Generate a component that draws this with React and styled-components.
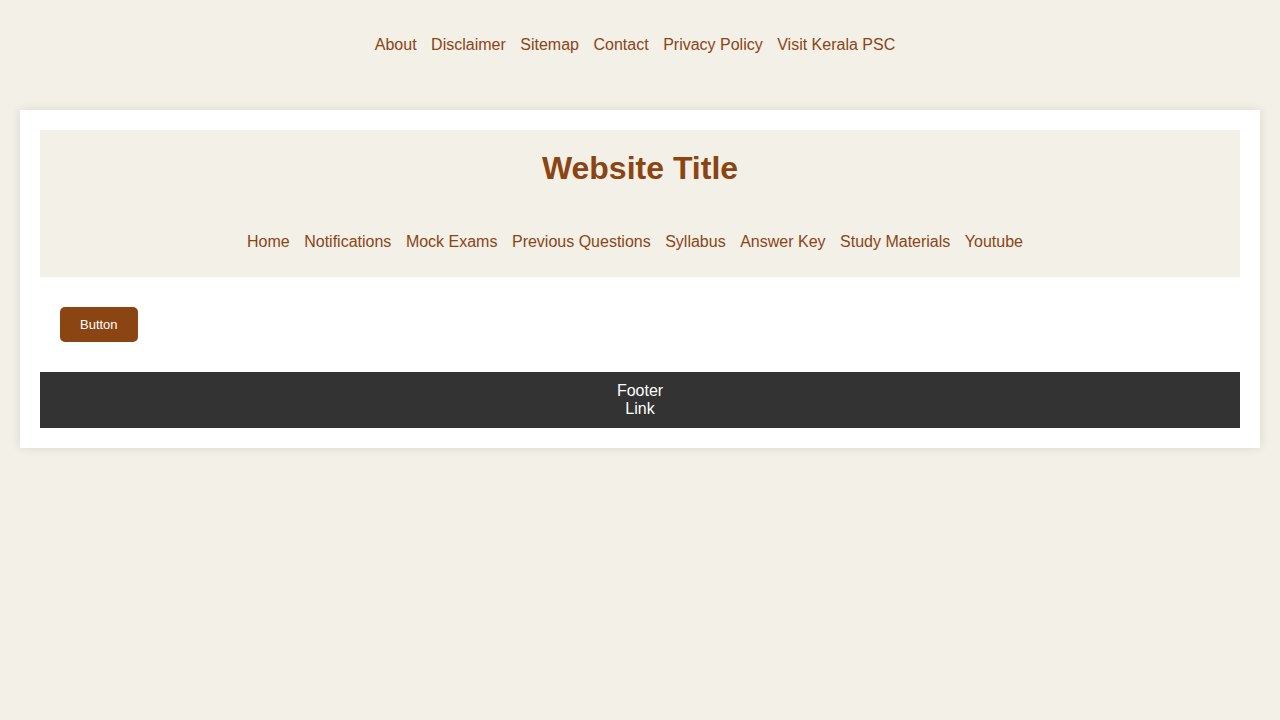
import React from "react";
import styled, { createGlobalStyle } from "styled-components";

const GlobalStyle = createGlobalStyle`
  body {
    margin: 0;
    background: #f3f0e8;
    font-family: "Liberation Sans", Arial, sans-serif;
  }
`;

const BROWN = "#8b4513";

const Page = styled.div`
  min-height: 100vh;
  padding: 0 20px 20px;
  box-sizing: border-box;
`;

const LinkRow = styled.nav`
  display: flex;
  justify-content: center;
  gap: 4.5px;
  padding: ${(props) => props.$pad || "0"};
  font-size: 16px;
  line-height: 18px;
`;

const NavLink = styled.a`
  color: ${BROWN};
  text-decoration: none;
  margin-right: 10px;
  cursor: pointer;
`;

const Card = styled.div`
  margin-top: 20px;
  background: #fff;
  padding: 20px;
  box-shadow: 0 0 10px rgba(0, 0, 0, 0.1);
`;

const Header = styled.header`
  background: #f3f0e8;
  padding: 20px 0 26px;
  text-align: center;
`;

const Title = styled.h1`
  margin: 0 0 46px;
  color: ${BROWN};
  font-size: 32px;
  line-height: 37px;
  font-weight: bold;
`;

const Main = styled.main`
  padding: 30px 20px;
`;

const Button = styled.button`
  background: ${BROWN};
  color: #fff;
  border: none;
  border-radius: 5px;
  padding: 10px 20px;
  font-family: "Liberation Sans", Arial, sans-serif;
  font-size: 13px;
  line-height: 15px;
  cursor: pointer;
`;

const Footer = styled.footer`
  background: #333;
  color: #fff;
  padding: 10px;
  text-align: center;
  font-size: 16px;
  line-height: 18px;
`;

const FooterLine = styled.div``;

const topLinks = ["About", "Disclaimer", "Sitemap", "Contact", "Privacy Policy", "Visit Kerala PSC"];
const mainLinks = [
  "Home",
  "Notifications",
  "Mock Exams",
  "Previous Questions",
  "Syllabus",
  "Answer Key",
  "Study Materials",
  "Youtube",
];

const App = () => {
  return (
    <>
      <GlobalStyle />
      <Page>
        <LinkRow $pad="36px 0 36px">
          {topLinks.map((l) => (
            <NavLink key={l}>{l}</NavLink>
          ))}
        </LinkRow>
        <Card>
          <Header>
            <Title>Website Title</Title>
            <LinkRow>
              {mainLinks.map((l) => (
                <NavLink key={l}>{l}</NavLink>
              ))}
            </LinkRow>
          </Header>
          <Main>
            <Button type="button">Button</Button>
          </Main>
          <Footer>
            <FooterLine>Footer</FooterLine>
            <FooterLine>Link</FooterLine>
          </Footer>
        </Card>
      </Page>
    </>
  );
};

export default App;
